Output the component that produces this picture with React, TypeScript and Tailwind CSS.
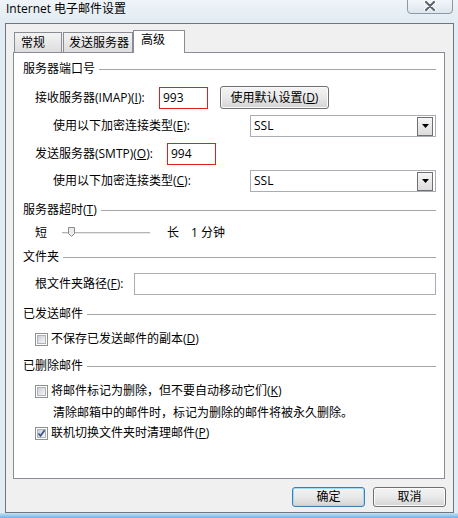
import React from "react";

const font = {
  fontFamily: '"Open Sans", "Noto Sans CJK SC", sans-serif',
};

function GroupTitle({ children, className = "" }: { children: React.ReactNode; className?: string }) {
  return (
    <div className={`flex items-center h-[16px] ${className}`}>
      <span className="whitespace-nowrap">{children}</span>
      <div className="flex-1 ml-[4px] h-[1px] bg-[#a5a5a5]" />
    </div>
  );
}

function Checkbox({ checked = false }: { checked?: boolean }) {
  return (
    <span className="w-[13px] h-[13px] border border-[#8e8f8f] bg-white p-[1px] flex shrink-0">
      <span className="relative flex-1 border border-[#aeb3b9] bg-gradient-to-br from-[#cbcfd5] to-[#f7f7f7]">
        {checked && (
          <svg viewBox="0 0 9 9" className="absolute -left-[1px] -top-[1px] w-[9px] h-[9px]">
            <path d="M1.5 4.5 L3.5 6.8 L7.6 1.2" fill="none" stroke="#3c5288" strokeWidth="1.7" />
          </svg>
        )}
      </span>
    </span>
  );
}

function Select() {
  return (
    <div className="ml-auto w-[186px] h-[22px] border border-[#a9aeb5] bg-white flex items-center pl-[3px] pr-[2px]">
      <span className="flex-1">SSL</span>
      <span className="w-[16px] h-[19px] border border-[#707070] bg-gradient-to-b from-[#f6f6f6] to-[#dcdcdc] flex items-center justify-center">
        <svg viewBox="0 0 7 4" className="w-[7px] h-[4px]">
          <path d="M0 0 H7 L3.5 4 Z" fill="#000" />
        </svg>
      </span>
    </div>
  );
}

function PortInput({ value }: { value: string }) {
  return (
    <div className="w-[49px] h-[22px] border border-[#e0201c] bg-white flex items-center pl-[3px]">{value}</div>
  );
}

function WinButton({ children, primary = false, className = "" }: { children: React.ReactNode; primary?: boolean; className?: string }) {
  return (
    <div
      className={`flex items-center justify-center rounded-[3px] border bg-gradient-to-b from-[#f4f4f4] via-[#e9e9e9] to-[#d4d4d4] ${
        primary ? "border-[#3c7fb1] shadow-[inset_0_0_0_1px_#9fdcf7]" : "border-[#707070] shadow-[inset_0_0_0_1px_#fbfbfb]"
      } ${className}`}
    >
      {children}
    </div>
  );
}

export default function App() {
  return (
    <div
      className="w-[458px] h-[518px] bg-[#e2ecf3] text-[12px] leading-[16px] text-black overflow-hidden flex flex-col"
      style={font}
    >
      {/* Title bar */}
      <div className="h-[23px] flex items-start justify-between bg-gradient-to-b from-[#eef4f8] to-[#e1ebf2]">
        <span className="pl-[6px] pt-[1px]">Internet 电子邮件设置</span>
        <div className="mr-[5px] -mt-[1px] w-[46px] h-[15px] rounded-b-[4px] border border-[#8d98a4] bg-gradient-to-b from-[#f2f6f9] to-[#dce6ee] flex items-center justify-center">
          <svg viewBox="0 0 12 10" className="w-[12px] h-[10px] -mt-[2px]">
            <path d="M2 1 L10 9 M10 1 L2 9" stroke="#fff" strokeWidth="4" strokeLinecap="round" />
            <path d="M2 1 L10 9 M10 1 L2 9" stroke="#5d6670" strokeWidth="2.2" strokeLinecap="round" />
          </svg>
        </div>
      </div>

      {/* Client area */}
      <div className="ml-[5px] w-[449px] h-[490px] border border-[#6f767e] bg-[#f0f0f0] px-[7px] pt-[6px]">
        {/* Tabs */}
        <div className="flex items-end h-[22px] pl-[1px] relative z-10">
          <div className="w-[48px] h-[20px] border border-b-0 border-[#898c95] bg-gradient-to-b from-[#f3f3f3] to-[#dedede] pl-[6px] flex items-center">
            常规
          </div>
          <div className="w-[70px] h-[20px] ml-[1px] border border-b-0 border-[#898c95] bg-gradient-to-b from-[#f3f3f3] to-[#dedede] pl-[5px] flex items-center">
            发送服务器
          </div>
          <div className="w-[52px] h-[23px] -mb-[1px] border border-b-0 border-[#898c95] bg-white pl-[7px] pb-[4px] flex items-center">
            高级
          </div>
        </div>

        {/* Panel */}
        <div className="w-[432px] h-[427px] border border-[#898c95] bg-white pl-[9px] pr-[8px] pt-[8px] flex flex-col">
          <GroupTitle>服务器端口号</GroupTitle>

          <div className="mt-[9px] flex items-center h-[23px] pl-[12px]">
            <span className="w-[124px]">
              接收服务器(IMAP)(<u>I</u>):
            </span>
            <PortInput value="993" />
            <WinButton className="ml-[12px] w-[109px] h-[23px]">
              使用默认设置(<u>D</u>)
            </WinButton>
          </div>

          <div className="mt-[6px] flex items-center h-[22px] pl-[30px]">
            <span>
              使用以下加密连接类型(<u>E</u>):
            </span>
            <Select />
          </div>

          <div className="mt-[6px] flex items-center h-[22px] pl-[12px]">
            <span className="w-[132px]">
              发送服务器(SMTP)(<u>O</u>):
            </span>
            <PortInput value="994" />
          </div>

          <div className="mt-[5px] flex items-center h-[22px] pl-[30px]">
            <span>
              使用以下加密连接类型(<u>C</u>):
            </span>
            <Select />
          </div>

          <GroupTitle className="mt-[10px]">
            <>
              服务器超时(<u>T</u>)
            </>
          </GroupTitle>

          <div className="mt-[7px] h-[16px] flex items-center pl-[12px]">
            <span className="w-[27px]">短</span>
            <div className="relative w-[88px] h-[10px] flex items-center">
              <div className="w-full h-[3px] border-t border-[#b5b5b5] border-b border-b-white bg-[#e7e7e7]" />
              <svg viewBox="0 0 7 10" className="absolute left-[6px] top-[-1px] w-[7px] h-[10px]">
                <path d="M0.5 0.5 H6.5 V6.5 L3.5 9.5 L0.5 6.5 Z" fill="#ececec" stroke="#8a8a8a" />
              </svg>
            </div>
            <span className="ml-[17px] w-[24px]">长</span>
            <span>1 分钟</span>
          </div>

          <GroupTitle className="mt-[8px]">文件夹</GroupTitle>

          <div className="mt-[8px] flex items-center h-[22px] pl-[12px]">
            <span className="w-[99px]">
              根文件夹路径(<u>F</u>):
            </span>
            <div className="flex-1 h-[22px] border border-[#abadb3] bg-white" />
          </div>

          <GroupTitle className="mt-[11px]">已发送邮件</GroupTitle>

          <div className="mt-[9px] h-[16px] flex items-center pl-[12px] gap-[3px]">
            <Checkbox />
            <span>
              不保存已发送邮件的副本(<u>D</u>)
            </span>
          </div>

          <GroupTitle className="mt-[11px]">已删除邮件</GroupTitle>

          <div className="mt-[9px] h-[16px] flex items-center pl-[12px] gap-[3px]">
            <Checkbox />
            <span>
              将邮件标记为删除，但不要自动移动它们(<u>K</u>)
            </span>
          </div>

          <div className="mt-[6px] h-[16px] flex items-center pl-[30px]">
            清除邮箱中的邮件时，标记为删除的邮件将被永久删除。
          </div>

          <div className="mt-[4px] h-[16px] flex items-center pl-[12px] gap-[3px]">
            <Checkbox checked />
            <span>
              联机切换文件夹时清理邮件(<u>P</u>)
            </span>
          </div>
        </div>

        {/* Buttons */}
        <div className="mt-[8px] flex justify-end gap-[8px]">
          <WinButton primary className="w-[73px] h-[20px]">
            确定
          </WinButton>
          <WinButton className="w-[73px] h-[20px]">取消</WinButton>
        </div>
      </div>

      <div className="flex-1 bg-gradient-to-b from-[#c4e2f7] to-[#6fb1e8]" />
    </div>
  );
}
